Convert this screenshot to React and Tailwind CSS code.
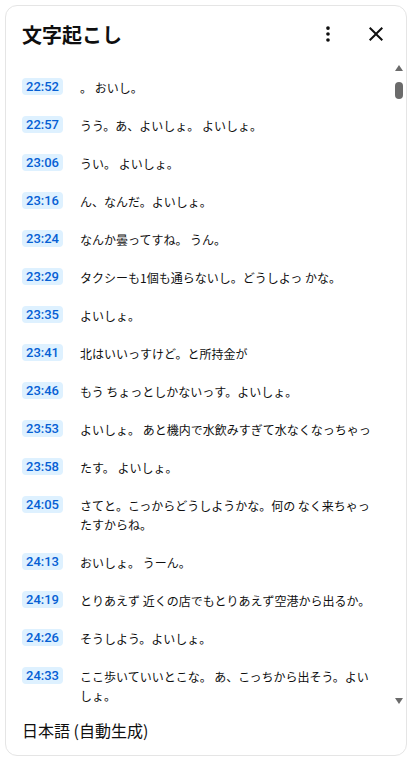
import React from 'react';

const ROWS = [
  ['22:52', '。 おいし。'],
  ['22:57', 'うう。あ、よいしょ。 よいしょ。'],
  ['23:06', 'うい。 よいしょ。'],
  ['23:16', 'ん、なんだ。よいしょ。'],
  ['23:24', 'なんか曇ってすね。 うん。'],
  ['23:29', 'タクシーも1個も通らないし。どうしよっ かな。'],
  ['23:35', 'よいしょ。'],
  ['23:41', '北はいいっすけど。と所持金が'],
  ['23:46', 'もう ちょっとしかないっす。よいしょ。'],
  ['23:53', 'よいしょ。 あと機内で水飲みすぎて水なくなっちゃっ'],
  ['23:58', 'たす。 よいしょ。'],
  ['24:05', 'さてと。こっからどうしようかな。何の なく来ちゃったすからね。'],
  ['24:13', 'おいしょ。 うーん。'],
  ['24:19', 'とりあえず 近くの店でもとりあえず空港から出るか。'],
  ['24:26', 'そうしよう。よいしょ。'],
  ['24:33', 'ここ歩いていいとこな。 あ、こっちから出そう。よいしょ。'],
];

const font = { fontFamily: '"Noto Sans CJK JP", Roboto, "Noto Sans", sans-serif' };

export default function App() {
  return (
    <div className="p-[5px] bg-white" style={font}>
      <div className="w-[402px] h-[751px] rounded-[12px] border border-[#e5e5e5] bg-white flex flex-col overflow-hidden">
        {/* header */}
        <div className="h-[56px] flex items-center pl-[16px] pr-[10px] shrink-0">
          <h2 className="flex-1 text-[20px] font-bold text-[#0f0f0f] leading-[28px] pt-[2px]">文字起こし</h2>
          <button className="w-[40px] h-[40px] flex items-center justify-center text-[#0f0f0f] mr-[8px]">
            <svg width="22" height="22" viewBox="0 0 24 24" fill="currentColor">
              <circle cx="12" cy="5.5" r="2" />
              <circle cx="12" cy="12" r="2" />
              <circle cx="12" cy="18.5" r="2" />
            </svg>
          </button>
          <button className="w-[40px] h-[40px] flex items-center justify-center text-[#0f0f0f]">
            <svg width="24" height="24" viewBox="0 0 24 24" fill="currentColor">
              <path d="M19 6.41 17.59 5 12 10.59 6.41 5 5 6.41 10.59 12 5 17.59 6.41 19 12 13.41 17.59 19 19 17.59 13.41 12z" />
            </svg>
          </button>
        </div>

        {/* list + scrollbar */}
        <div className="h-[650px] flex shrink-0">
          <div className="flex-1 overflow-hidden pt-[6px]">
            {ROWS.map(([t, text]) => (
              <div key={t} className="flex items-start pl-[16px] pr-[18px] py-[9.5px]">
                <div className="w-[58px] shrink-0 flex">
                  <div
                    className="h-[17px] px-[4px] rounded-[4px] bg-[#def1ff] text-[#065fd4] text-[13px] font-medium leading-[17px]"
                    style={{ fontFamily: 'Roboto, "Liberation Sans", sans-serif' }}
                  >
                    {t}
                  </div>
                </div>
                <div className="flex-1 text-[12px] leading-[19px] text-[#0f0f0f]">{text}</div>
              </div>
            ))}
          </div>
          <div className="w-[14px] shrink-0 flex flex-col items-center pt-[3px] pb-[8px]">
            <div className="w-0 h-0 border-l-[4px] border-r-[4px] border-b-[6px] border-l-transparent border-r-transparent border-b-[#6b6b6b]" />
            <div className="w-[8px] h-[17px] rounded-full bg-[#6b6b6b] mt-[11px]" />
            <div className="flex-1" />
            <div className="w-0 h-0 border-l-[4px] border-r-[4px] border-t-[6px] border-l-transparent border-r-transparent border-t-[#6b6b6b]" />
          </div>
        </div>

        {/* footer */}
        <div className="flex-1 flex items-center pl-[16px] pb-[8px]">
          <span className="text-[16px] text-[#0f0f0f] leading-[22px]">日本語 (自動生成)</span>
        </div>
      </div>
    </div>
  );
}
